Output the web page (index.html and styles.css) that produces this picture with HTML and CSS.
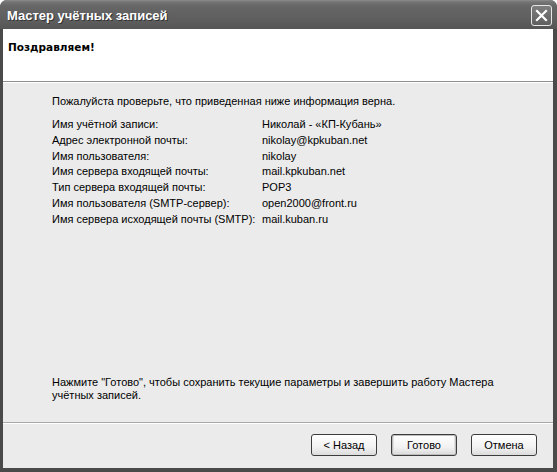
FILE: index.html
```html
<!DOCTYPE html>
<html lang="ru">
<head>
<meta charset="utf-8">
<title>Мастер учётных записей</title>
<link rel="stylesheet" href="styles.css">
</head>
<body>
<div class="window">
  <div class="titlebar">
    <span class="title">Мастер учётных записей</span>
    <div class="close">
      <svg width="13" height="13" viewBox="0 0 13 13"><path d="M2 2 L11 11 M11 2 L2 11" stroke="#fff" stroke-width="2.2" stroke-linecap="square"/></svg>
    </div>
  </div>
  <div class="frame">
    <div class="header">
      <div class="heading">Поздравляем!</div>
    </div>
    <div class="content">
      <p class="intro">Пожалуйста проверьте, что приведенная ниже информация верна.</p>
      <div class="info">
        <span>Имя учётной записи:</span><span>Николай - «КП-Кубань»</span>
        <span>Адрес электронной почты:</span><span>nikolay@kpkuban.net</span>
        <span>Имя пользователя:</span><span>nikolay</span>
        <span>Имя сервера входящей почты:</span><span>mail.kpkuban.net</span>
        <span>Тип сервера входящей почты:</span><span>POP3</span>
        <span>Имя пользователя (SMTP-сервер):</span><span>open2000@front.ru</span>
        <span>Имя сервера исходящей почты (SMTP):</span><span>mail.kuban.ru</span>
      </div>
      <p class="finish">Нажмите "Готово", чтобы сохранить текущие параметры и завершить работу Мастера учётных записей.</p>
    </div>
    <div class="footer">
      <button class="btn">&lt; Назад</button>
      <button class="btn default">Готово</button>
      <button class="btn">Отмена</button>
    </div>
  </div>
</div>
</body>
</html>
```
FILE: styles.css
```css
html, body {
  margin: 0;
  padding: 0;
  background: #ffffff;
}
.window {
  width: 557px;
  height: 472px;
  display: flex;
  flex-direction: column;
  background: #4a4a4a;
  border-radius: 7px 7px 0 0;
  overflow: hidden;
  font-family: "Liberation Sans", Arial, sans-serif;
  font-size: 11px;
  color: #000;
}
.titlebar {
  height: 29px;
  flex: none;
  display: flex;
  align-items: center;
  justify-content: space-between;
  padding: 0 5px 0 7px;
  background: linear-gradient(#8c8c8c 0, #747474 2px, #666 6px, #5e5e5e 20px, #555 29px);
}
.title {
  color: #fff;
  font-family: "Liberation Sans", Arial, sans-serif;
  font-weight: bold;
  font-size: 13px;
  text-shadow: 1px 1px 0 #333;
  padding-top: 1px;
}
.close {
  width: 19px;
  height: 19px;
  border: 1px solid #e6e6e6;
  border-radius: 3px;
  background: linear-gradient(#7e7e7e, #5f5f5f);
  display: flex;
  align-items: center;
  justify-content: center;
  margin-top: 1px;
}
.frame {
  flex: 1;
  margin: 0 4px 4px 3px;
  display: flex;
  flex-direction: column;
  background: #ebebeb;
}
.header {
  height: 52px;
  flex: none;
  background: #fff;
  border-bottom: 1px solid #8e8e8e;
  box-shadow: 0 1px 0 #fff;
}
.heading {
  font-weight: bold;
  font-family: "DejaVu Sans", sans-serif;
  font-size: 10.5px;
  padding: 12px 0 0 5px;
}
.content {
  flex: 1;
  display: flex;
  flex-direction: column;
  padding: 13px 16px 0 49px;
}
.intro {
  margin: 0;
  line-height: 13px;
}
.info {
  display: grid;
  grid-template-columns: 210px auto;
  line-height: 15.8px;
  margin-top: 9px;
}
.finish {
  margin: auto 0 20px;
  line-height: 13px;
}
.footer {
  flex: none;
  height: 46px;
  box-sizing: border-box;
  border-top: 1px solid #a8a8a8;
  box-shadow: inset 0 1px 0 #fff;
  display: flex;
  justify-content: flex-end;
  align-items: flex-start;
  gap: 14px;
  padding: 11px 16px 0 0;
}
.btn {
  width: 66px;
  height: 22px;
  box-sizing: border-box;
  border: 1px solid #3c3c3c;
  border-radius: 3px;
  background: linear-gradient(#ffffff, #f2f2f2 60%, #dcdcdc);
  font-family: "Liberation Sans", Arial, sans-serif;
  font-size: 11px;
  color: #000;
  padding: 0;
}
.btn.default {
  box-shadow: inset 0 0 0 1px #bdbdbd, inset 0 -1px 0 2px #e0e0e0;
}
```
